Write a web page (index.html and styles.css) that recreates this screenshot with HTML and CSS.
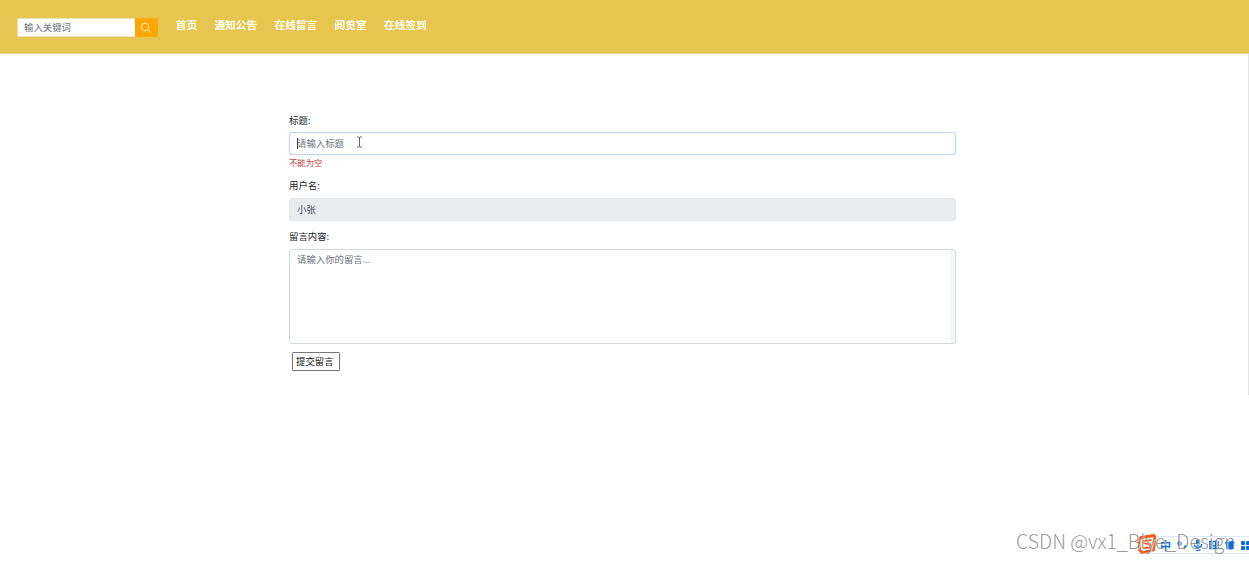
FILE: index.html
```html
<!DOCTYPE html>
<html lang="zh-CN">
<head>
    <meta charset="UTF-8">
    <meta name="viewport" content="width=device-width, initial-scale=1.0">
    <title>在线留言</title>
    <link rel="stylesheet" href="styles.css">
</head>
<body>
    <div class="header">
        <form class="search">
            <input type="text" class="search-input" placeholder="输入关键词">
            <button type="button" class="search-btn" aria-label="搜索">
                <svg width="12" height="12" viewBox="0 0 12 12" fill="none" stroke="#fff3d0" stroke-width="1" stroke-linecap="round">
                    <circle cx="5" cy="5" r="3.7"/>
                    <path d="M7.8 7.8L10.6 10.2"/>
                </svg>
            </button>
        </form>
        <nav class="nav">
            <a>首页</a>
            <a>通知公告</a>
            <a>在线留言</a>
            <a>阅览室</a>
            <a>在线签到</a>
        </nav>
    </div>
    <div class="page-scroll"></div>

    <form class="message-form">
        <label for="title">标题:</label>
        <div class="title-field">
            <input type="text" id="title" class="form-control focused" placeholder="请输入标题">
            <span class="caret"></span>
            <svg class="pointer" width="7" height="12" viewBox="0 0 7 12" fill="none" stroke="#555" stroke-width="0.9">
                <path d="M1 1H3L3.5 1.5L4 1H6M3.5 1.5V10.5M1 11H3L3.5 10.5L4 11H6"/>
            </svg>
        </div>
        <div class="error">不能为空</div>
        <label for="username">用户名:</label>
        <input type="text" id="username" class="form-control readonly" value="小张" readonly>
        <label for="content">留言内容:</label>
        <textarea id="content" class="form-control content" placeholder="请输入你的留言..."></textarea>
        <button type="button" class="submit-btn">提交留言</button>
    </form>

    <!-- Input method toolbar -->
    <div class="ime-bar">
        <svg class="ime-logo" width="20" height="20" viewBox="0 0 20 20" fill="none">
            <path d="M4 3.5L17 1.5L18 4L16.5 16L5 18.5L2.5 16L2 6Z" fill="#fff" stroke="#fa5a1e" stroke-width="2.8" stroke-linejoin="round"/>
            <path d="M14.5 6L7 6.8Q5.5 8.5 7.5 9.5L13 10.2Q14.5 12 12.5 13.5L6 14" stroke="#fa5a1e" stroke-width="1.8"/>
        </svg>
        <span class="ime-mode">中</span>
        <svg width="10" height="10" viewBox="0 0 10 10" fill="none" stroke="#0b6fd6">
            <circle cx="2.5" cy="3.5" r="1.5" stroke-width="1.4"/>
            <path d="M8 5.5Q8.7 7.5 6.8 8.5" stroke-width="1.8"/>
        </svg>
        <svg width="10" height="12" viewBox="0 0 10 12" fill="none" stroke="#0b6fd6" stroke-width="1.4">
            <rect x="3.5" y="1" width="3" height="5" rx="1.5" fill="#0b6fd6"/>
            <path d="M1.3 5Q1.3 8.3 5 8.3Q8.7 8.3 8.7 5M5 8.3V11M2.5 11H7.5"/>
        </svg>
        <svg width="10" height="10" viewBox="0 0 11 10" fill="none" stroke="#0b6fd6" stroke-width="1.5">
            <rect x="1" y="1" width="9" height="8"/>
            <path d="M4 1V9M7 1V9M3 6H8"/>
        </svg>
        <svg width="10" height="10" viewBox="0 0 11 10" fill="#0b6fd6">
            <path d="M2.5 0L5.5 1.2L8.5 0L11 2L10 5L9.5 4.5V9Q5.5 11 1.5 9V4.5L1 5L0 2Z"/>
        </svg>
        <svg width="9" height="9" viewBox="0 0 9 9" fill="#0b6fd6">
            <rect width="4" height="4" rx="1"/>
            <rect x="5" width="4" height="4" rx="1"/>
            <rect y="5" width="4" height="4" rx="1"/>
            <rect x="5" y="5" width="4" height="4" rx="1"/>
        </svg>
    </div>
    <div class="watermark">CSDN @vx1_Blye_Design</div>
</body>
</html>
```
FILE: styles.css
```css
/* Basic Styles */
* {
    box-sizing: border-box;
}
body {
    position: relative;
    margin: 0;
    height: 561px;
    overflow: hidden;
    background-color: #fff;
    color: #212529;
    font-family: "Noto Sans CJK SC", sans-serif;
    font-size: 9.4px;
}
input, textarea, button {
    font-family: inherit;
    font-size: 9.4px;
    margin: 0;
}

/* Header */
.header {
    display: flex;
    align-items: flex-start;
    height: 54px;
    padding: 18px 17px 0;
    background-color: #e6c550;
    border-bottom: 1px solid #e5d6a0;
}
.search {
    display: flex;
    width: 141px;
    height: 19px;
}
.search-input {
    width: 118px;
    padding: 0 6px 2px;
    border: 1px solid #eee3c0;
    border-right: none;
    border-radius: 2px 0 0 2px;
    background-color: #fff;
    outline: none;
}
.search-btn {
    display: flex;
    align-items: center;
    justify-content: center;
    width: 23px;
    padding: 0 1px 0 0;
    border: none;
    border-radius: 0 2px 2px 0;
    background-color: #ffa600;
}
.nav {
    display: flex;
    gap: 17.3px;
    margin-left: 17.7px;
    color: #fffdf2;
    font-size: 10.7px;
    font-weight: bold;
    line-height: 14px;
}

/* Form */
.message-form {
    display: flex;
    flex-direction: column;
    width: 667px;
    margin: 59px 0 0 289px;
}
label {
    height: 19px;
    line-height: 14px;
}
.form-control {
    display: block;
    width: 100%;
    height: 23px;
    padding: 0 7px 1px;
    border: 1px solid #d5dade;
    border-radius: 3px;
    color: #495057;
    background-color: #fff;
    outline: none;
}
::placeholder {
    color: #6c757d;
    opacity: 1;
}
.focused {
    border-color: #bcd7f3;
    box-shadow: 0 0 1px #c4ddf8;
}
.title-field {
    position: relative;
}
.caret {
    position: absolute;
    left: 8px;
    top: 6px;
    width: 1px;
    height: 11px;
    background-color: #444;
}
.pointer {
    position: absolute;
    left: 67px;
    top: 4px;
}
.error {
    height: 23px;
    color: #c9413f;
    font-size: 8.4px;
    line-height: 15px;
}
.readonly {
    margin-bottom: 9px;
    border-color: #e1e5e8;
    background-color: #e9ecef;
}
#username {
    margin-top: 1px;
    margin-bottom: 8px;
}
.content {
    height: 95px;
    margin-top: 1px;
    padding: 2px 7px;
    line-height: 14px;
    resize: none;
    background: linear-gradient(#f5f6f6, #f5f6f6) right / 5px 100% no-repeat #fff;
}
.submit-btn {
    width: 48px;
    height: 19px;
    margin: 8px 0 0 3px;
    padding: 0 3px 1px;
    border: 1px solid #777;
    border-radius: 1px;
    background-color: #fff;
    color: #111;
    line-height: 15px;
    text-align: left;
    white-space: nowrap;
}

/* Edge of the page scrollbar */
.page-scroll {
    position: absolute;
    right: 0;
    top: 54px;
    width: 1px;
    height: 341px;
    background-color: #e3e3e3;
}

/* Input method toolbar */
.ime-bar {
    position: absolute;
    left: 1137px;
    top: 536px;
    display: flex;
    align-items: center;
    gap: 6px;
    width: 112px;
    height: 18px;
    border-top: 1px solid #dbe8f5;
    border-bottom: 1px solid #dbe8f5;
}
.ime-bar svg {
    flex: none;
}
.ime-logo {
    margin-top: -2px;
}
.ime-mode {
    width: 11px;
    margin-left: -3px;
    color: #0b6fd6;
    font-size: 11px;
    font-weight: bold;
    line-height: 16px;
}

/* Watermark */
.watermark {
    position: absolute;
    left: 1016px;
    top: 527px;
    color: rgba(140, 140, 140, 0.9);
    font-family: "Noto Sans CJK SC", sans-serif;
    font-size: 19.5px;
    font-weight: 300;
    line-height: 28px;
    white-space: nowrap;
    text-shadow: 1px 1px 0 rgba(255, 255, 255, 0.7);
}
```
